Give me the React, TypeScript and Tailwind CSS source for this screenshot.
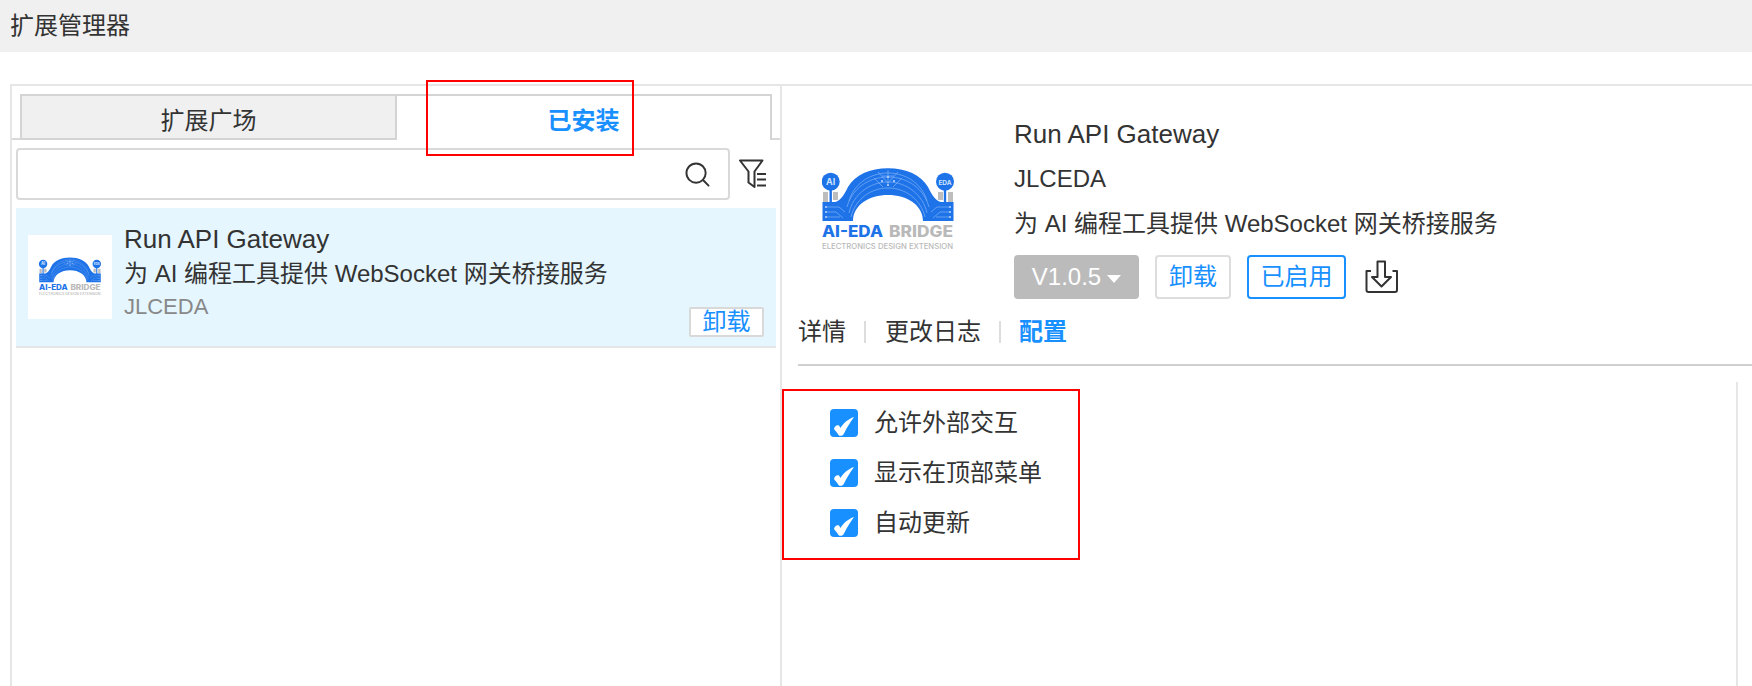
const CJK = "font-['Liberation_Sans','Noto_Sans_CJK_SC',sans-serif]";

function BridgeLogo({ className }: { className?: string }) {
  return (
    <svg viewBox="0 0 132 84" className={className}>
      <path d="M1 25h5v10H1ZM11 25h5v8h-5ZM126 25h5v10h-5ZM116 25h5v8h-5Z" fill="#bdbdbd" />
      <path d="M0.500 54V35H12C18 35 22 28 26 20 33 8 48 1.300 66 1.300S99 8 106 20C110 28 114 35 120 35H131.500V54H101C101 38 85 28 66 28S31 38 31 54Z" fill="#1e73e8" />
      <g fill="none" stroke="#7fb2f6" strokeWidth="0.7">
        <path d="M27 34C31 19 46 6 66 6s35 13 39 28" />
        <path d="M25 40C30 22 46 10 66 10s36 12 41 30" />
        <path d="M27 46C31 28 47 15 66 15s35 13 39 31" />
        <path d="M29 50C33 33 48 21 66 21s33 12 37 29" />
        <path d="M4 40h13l6 5M4 45h10l7 6M4 50h14M128 40h-13l-6 5M128 45h-10l-7 6M128 50h-14" />
        <path d="M66 3v16M56 5l10 11 10-11M52 11l9 9M80 11l-9 9M60 9h12" />
      </g>
      <g fill="#b7d3fa">
        <circle cx="66" cy="10" r="1.100" />
        <circle cx="60" cy="14" r="1.100" />
        <circle cx="72" cy="14" r="1.100" />
        <circle cx="66" cy="18" r="1.100" />
        <circle cx="4" cy="40" r="1" />
        <circle cx="4" cy="45" r="1" />
        <circle cx="4" cy="50" r="1" />
        <circle cx="128" cy="40" r="1" />
        <circle cx="128" cy="45" r="1" />
        <circle cx="128" cy="50" r="1" />
      </g>
      <circle cx="8.700" cy="14.700" r="9" fill="#1e73e8" />
      <circle cx="123" cy="14.700" r="9" fill="#1e73e8" />
      <rect x="7.500" y="22" width="2.400" height="14" fill="#1e73e8" />
      <rect x="121.800" y="22" width="2.400" height="14" fill="#1e73e8" />
      <text x="8.700" y="18" textAnchor="middle" fontSize="9" fontWeight="700" fill="#cfe2fc" fontFamily="Inter, sans-serif">AI</text>
      <text x="123" y="17.500" textAnchor="middle" fontSize="6.500" fontWeight="700" fill="#cfe2fc" fontFamily="Inter, sans-serif">EDA</text>
      <text x="0" y="70" fontSize="15.500" fontWeight="800" fill="#1e73e8" fontFamily="Inter, sans-serif" textLength="61" lengthAdjust="spacingAndGlyphs">AI-EDA</text>
      <text x="67" y="70" fontSize="15.500" fontWeight="800" fill="#b9b9b9" fontFamily="Inter, sans-serif" textLength="64" lengthAdjust="spacingAndGlyphs">BRIDGE</text>
      <text x="0" y="81.500" fontSize="7.500" fontWeight="500" fill="#b9b9b9" fontFamily="Inter, sans-serif" textLength="131" lengthAdjust="spacingAndGlyphs">ELECTRONICS DESIGN EXTENSION</text>
    </svg>
  );
}

function Check() {
  return (
    <span className="flex h-[28px] w-[28px] items-center justify-center rounded-[4px] bg-[#1890ff]">
      <svg viewBox="0 0 28 28" className="h-[28px] w-[28px]">
        <path d="M4 20c.5-3 3-4.500 5-3.500l1.500 2.500C13 14.500 18 10 24 8c-3 4.500-7 10-10 16.500-1 2.500-4 3-5.500 1.500C7 23.500 5.500 22 4 20Z" fill="#fff" />
      </svg>
    </span>
  );
}

function Option({ label }: { label: string }) {
  return (
    <div className="flex h-[28px] items-center gap-[16px]">
      <Check />
      <span className="text-[24px] text-[#333]">{label}</span>
    </div>
  );
}

export default function App() {
  return (
    <div className={`relative h-[686px] w-[1752px] overflow-hidden bg-white ${CJK}`}>
      <div className="flex h-[52px] items-center bg-[#f0f0f0] pl-[10px] text-[24px] text-[#333]">扩展管理器</div>

      <div className="ml-[10px] mt-[32px] flex h-[602px] border-l-2 border-t-2 border-[#e6e6e6]">
        {/* left column */}
        <div className="w-[770px] shrink-0 border-r-2 border-[#e6e6e6]">
          <div className="flex h-[54px] items-end">
            <div className="h-[2px] w-[8px] bg-[#d9d9d9]" />
            <div className="flex h-[46px] w-[377px] items-center justify-center border-2 border-[#d4d4d4] bg-[#f0f0f0] pt-[7px] text-[24px] text-[#333]">扩展广场</div>
            <div className="flex h-[46px] w-[375px] items-center justify-center border-r-2 border-t-2 border-[#d4d4d4] pt-[6px] text-[24px] font-bold text-[#1890ff]">已安装</div>
            <div className="h-[2px] flex-1 bg-[#d9d9d9]" />
          </div>

          <div className="mt-[8px] flex items-center pl-[4px]">
            <div className="flex h-[52px] w-[714px] items-center justify-end rounded-[4px] border-2 border-[#d9d9d9] pr-[18px]">
              <svg viewBox="0 0 26 26" className="h-[25px] w-[25px]" fill="none" stroke="#333" strokeWidth="2">
                <circle cx="11.500" cy="11.500" r="10" />
                <path d="M19 19l5.500 5.500" strokeLinecap="round" />
              </svg>
            </div>
            <svg viewBox="0 0 28 30" className="ml-[9px] h-[30px] w-[28px]" fill="none" stroke="#333" strokeWidth="2">
              <path d="M1 1.500h22.500l-8 11V28l-6-4.500V12.500Z" strokeLinejoin="round" />
              <path d="M18 15h9M18 20.500h9M18 26.500h9" />
            </svg>
          </div>

          <div className="ml-[4px] mt-[8px] flex h-[140px] w-[760px] border-b-2 border-[#e6e6e6] bg-[#e5f6fe] pl-[12px]">
            <div className="mt-[27px] flex h-[84px] w-[84px] shrink-0 items-center justify-center bg-white">
              <BridgeLogo className="w-[62px]" />
            </div>
            <div className="ml-[12px] flex-1 pt-[14px]">
              <div className="text-[26px] leading-[34px] text-[#333]">Run API Gateway</div>
              <div className="text-[24px] leading-[35px] text-[#333]">为 AI 编程工具提供 WebSocket 网关桥接服务</div>
              <div className="text-[22px] leading-[32px] text-[#888]">JLCEDA</div>
            </div>
            <div className="mr-[12px] mt-[99px] flex h-[30px] w-[75px] items-center justify-center self-start rounded-[2px] border-2 border-[#d9d9d9] bg-white text-[24px] text-[#1890ff]">卸载</div>
          </div>
        </div>

        {/* right column */}
        <div className="min-w-0 flex-1 pl-[16px]">
          <div className="flex pt-[29px]">
            <div className="flex h-[180px] w-[180px] shrink-0 items-center justify-center pt-[8px]">
              <BridgeLogo className="w-[132px]" />
            </div>
            <div className="ml-[36px]">
              <div className="text-[26px] leading-[38px] text-[#333]">Run API Gateway</div>
              <div className="mt-[7px] text-[24px] leading-[38px] text-[#333]">JLCEDA</div>
              <div className="mt-[7px] text-[24px] leading-[38px] text-[#333]">为 AI 编程工具提供 WebSocket 网关桥接服务</div>
              <div className="mt-[12px] flex items-center">
                <div className="flex h-[44px] w-[125px] items-center justify-center gap-[6px] rounded-[4px] bg-[#bbb] text-[24px] text-white">
                  V1.0.5
                  <span className="mt-[4px] h-0 w-0 border-x-[7px] border-t-[8px] border-x-transparent border-t-white" />
                </div>
                <div className="ml-[16px] flex h-[44px] w-[76px] items-center justify-center rounded-[4px] border-2 border-[#ddd] text-[24px] text-[#1890ff]">卸载</div>
                <div className="ml-[16px] flex h-[44px] w-[99px] items-center justify-center rounded-[4px] border-2 border-[#1890ff] text-[24px] text-[#1890ff]">已启用</div>
                <svg viewBox="0 0 34 34" className="ml-[19px] h-[34px] w-[34px]" fill="none" stroke="#333" strokeWidth="2">
                  <path d="M6 11H1.500v19a2 2 0 0 0 2 2h26.500a2 2 0 0 0 2-2V11H27.500" strokeLinejoin="round" />
                  <path d="M12.500 1.500h7.500V17h6L16.500 26.500 7 17h5.500Z" strokeLinejoin="round" />
                </svg>
              </div>
            </div>
          </div>

          <div className="mt-[10px] flex h-[57px] items-center border-b-2 border-[#d0d0d0] pb-[9px] text-[24px] text-[#333]">
            <span>详情</span>
            <span className="ml-[18px] mr-[19px] h-[22px] w-[2px] bg-[#ddd]" />
            <span>更改日志</span>
            <span className="ml-[18px] mr-[18px] h-[22px] w-[2px] bg-[#ddd]" />
            <span className="font-bold text-[#1890ff]">配置</span>
          </div>

          <div className="flex">
            <div className="flex-1 pl-[32px] pt-[43px]">
              <div className="flex flex-col gap-[22px]">
                <Option label="允许外部交互" />
                <Option label="显示在顶部菜单" />
                <Option label="自动更新" />
              </div>
            </div>
            <div className="mr-[14px] mt-[16px] h-[320px] w-[2px] bg-[#e6e6e6]" />
          </div>
        </div>
      </div>

      {/* annotations */}
      <div className="absolute left-[426px] top-[80px] h-[76px] w-[208px] border-2 border-[#f00]" />
      <div className="absolute left-[782px] top-[389px] h-[171px] w-[298px] border-2 border-[#f00]" />
    </div>
  );
}
